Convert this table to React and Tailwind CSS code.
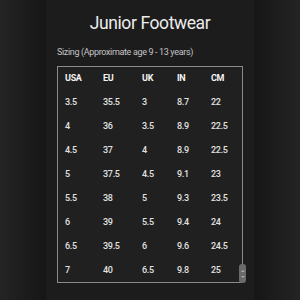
import React from 'react'

// Tableau des tailles junior, panneau sombre centré
const rows = [
  ['3.5', '35.5', '3', '8.7', '22'],
  ['4', '36', '3.5', '8.9', '22.5'],
  ['4.5', '37', '4', '8.9', '22.5'],
  ['5', '37.5', '4.5', '9.1', '23'],
  ['5.5', '38', '5', '9.3', '23.5'],
  ['6', '39', '5.5', '9.4', '24'],
  ['6.5', '39.5', '6', '9.6', '24.5'],
  ['7', '40', '6.5', '9.8', '25'],
]

const cols = 'grid grid-cols-[38px_39px_35px_34px_1fr] h-[24px] items-center pl-[7px] text-[9px] tracking-[-0.3px]'

export default function App() {
  return (
    <div
      className="w-[300px] h-[300px] flex justify-center bg-[linear-gradient(90deg,#242424_0%,#161616_15%,#161616_85%,#242424_100%)]"
      style={{ fontFamily: 'Roboto, "Liberation Sans", sans-serif' }}
    >
      <div className="w-[208px] h-full bg-[#1c1c1c] flex flex-col px-[11px]">
        <h1 className="text-[17.5px] tracking-[-0.4px] text-[#ececec] text-center mt-[12px] leading-[22px]">Junior Footwear</h1>
        <p className="text-[9px] tracking-[-0.35px] text-[#c4c4c4] mt-[12px] leading-[12px]">Sizing (Approximate age 9 - 13 years)</p>
        <div className="relative mt-[8px] h-[217px] border border-[#8a8a8a] bg-[#202020]">
          <div className="h-full overflow-hidden">
            <div className={cols + ' font-bold text-[#f4f4f4]'}>
              <span>USA</span><span>EU</span><span>UK</span><span>IN</span><span>CM</span>
            </div>
            {rows.map((r, i) => (
              <div key={i} className={cols + ' font-medium text-[#e2e2e2]'}>
                {r.map((c, j) => <span key={j}>{c}</span>)}
              </div>
            ))}
          </div>
          <div className="absolute right-[-4px] bottom-[-1px] w-[7px] h-[19px] rounded-[3px] bg-[#6a6a6a] flex flex-col items-center justify-center gap-[4px]">
            <span className="w-0 h-0 border-x-[2px] border-x-transparent border-b-[2px] border-b-[#aaa]" />
            <span className="w-0 h-0 border-x-[2px] border-x-transparent border-t-[2px] border-t-[#aaa]" />
          </div>
        </div>
      </div>
    </div>
  )
}
